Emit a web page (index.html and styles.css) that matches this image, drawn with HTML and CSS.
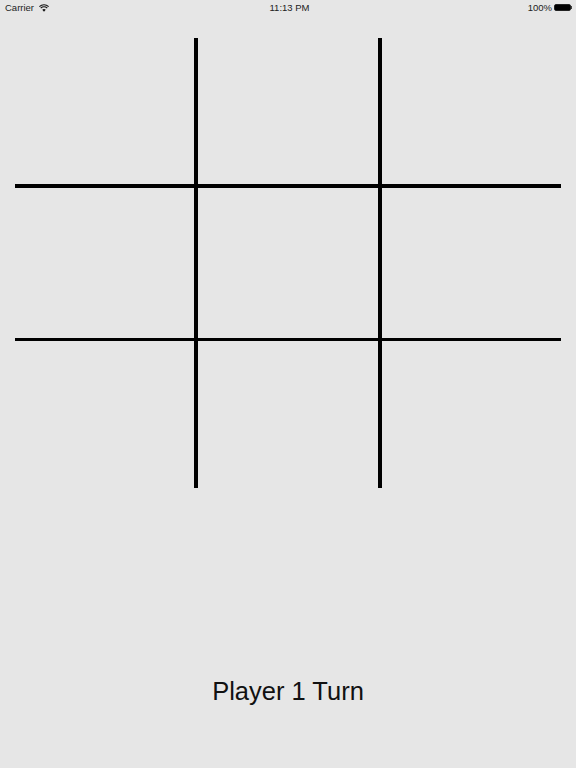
FILE: index.html
```html
<!DOCTYPE html>
<html lang="en">
<head>
<meta charset="UTF-8" />
<meta name="viewport" content="width=device-width, initial-scale=1" />
<title>Tic Tac Toe</title>
<link rel="stylesheet" href="styles.css">
</head>
<body>

<div class="status-bar">
  <div class="status-left">
    <span>Carrier</span>
    <svg class="wifi" width="10" height="8" viewBox="0 0 11 8">
      <path d="M5.5 8 3.6 5.9a2.8 2.8 0 0 1 3.8 0z" fill="#111" />
      <path d="M1.9 4.1a5.2 5.2 0 0 1 7.2 0" fill="none" stroke="#111" stroke-width="1.3" />
      <path d="M.4 2.5a7.4 7.4 0 0 1 10.2 0" fill="none" stroke="#111" stroke-width="1.3" />
    </svg>
  </div>
  <div class="status-time">11:13 PM</div>
  <div class="status-right">
    <span>100%</span>
    <div class="battery"><div class="battery-fill"></div></div>
    <div class="battery-tip"></div>
  </div>
</div>

<div class="board">
  <div class="line line-v col-1"></div>
  <div class="line line-v col-2"></div>
  <div class="line line-h row-1"></div>
  <div class="line line-h row-2"></div>
</div>

<div class="turn">Player 1 Turn</div>

</body>
</html>
```

FILE: styles.css
```css
html, body {
  height: 100%;
}
body {
  background: #e6e6e6;
  color: #000;
  font-family: 'Liberation Sans', Arial, sans-serif;
  margin: 0;
  display: flex;
  flex-direction: column;
  overflow: hidden;
}
.status-bar {
  height: 15px;
  padding: 0 4px 0 5px;
  display: grid;
  grid-template-columns: 1fr auto 1fr;
  align-items: center;
  font-size: 9.5px;
  color: #222;
}
.status-left {
  display: flex;
  align-items: center;
  gap: 5px;
}
.status-right {
  display: flex;
  align-items: center;
  justify-content: flex-end;
}
.status-right span {
  margin-right: 2px;
}
.status-time {
  font-size: 9.5px;
  margin-left: 2px;
}
.battery {
  width: 17px;
  height: 7px;
  box-sizing: border-box;
  border: 1px solid #222;
  border-radius: 2px;
}
.battery-fill {
  height: 100%;
  background: #000;
}
.battery-tip {
  width: 1px;
  height: 3px;
  background: #444;
}
.board {
  margin: 23px 15px 0;
  height: 450px;
  display: grid;
  grid-template-columns: 179px 4px 180px 4px 179px;
  grid-template-rows: 146px 4px 150px 3px 147px;
}
.line {
  background: #000;
}
.line-v {
  grid-row: 1 / -1;
}
.line-h {
  grid-column: 1 / -1;
}
.col-1 { grid-column: 2; }
.col-2 { grid-column: 4; }
.row-1 { grid-row: 2; }
.row-2 { grid-row: 4; }
.turn {
  margin-top: 188px;
  text-align: center;
  font-size: 25.5px;
  line-height: 30px;
  color: #111;
}
```
